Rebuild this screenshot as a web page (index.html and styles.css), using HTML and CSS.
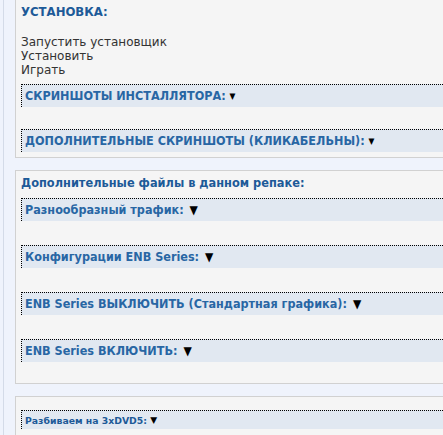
FILE: index.html
```html
<!DOCTYPE html>
<html lang="ru">
  <head>
    <meta charset="UTF-8" />
    <title>Установка</title>
    <link rel="stylesheet" href="styles.css">
  </head>
  <body>
    <div class="page">
      <div class="post post-cut">
        <div class="title">УСТАНОВКА:</div>
        <div class="steps">
          Запустить установщик<br />
          Установить<br />
          Играть
        </div>
        <div class="sp">
          <div class="sp-head">СКРИНШОТЫ ИНСТАЛЛЯТОРА: <span class="arrow">▼</span></div>
        </div>
        <div class="sp">
          <div class="sp-head">ДОПОЛНИТЕЛЬНЫЕ СКРИНШОТЫ (КЛИКАБЕЛЬНЫ): <span class="arrow">▼</span></div>
        </div>
      </div>

      <div class="post post-files">
        <div class="subtitle">Дополнительные файлы в данном репаке:</div>
        <div class="sp">
          <div class="sp-head big">Разнообразный трафик: <span class="arrow">▼</span></div>
        </div>
        <div class="sp">
          <div class="sp-head big">Конфигурации ENB Series: <span class="arrow">▼</span></div>
        </div>
        <div class="sp">
          <div class="sp-head big">ENB Series ВЫКЛЮЧИТЬ (Стандартная графика): <span class="arrow">▼</span></div>
        </div>
        <div class="sp">
          <div class="sp-head big">ENB Series ВКЛЮЧИТЬ: <span class="arrow">▼</span></div>
        </div>
      </div>

      <div class="post post-small">
        <div class="sp">
          <div class="sp-head small">Разбиваем на 3xDVD5: <span class="arrow">▼</span></div>
        </div>
      </div>
    </div>
  </body>
</html>
```

FILE: styles.css
```css
body {
  margin: 0;
  background-color: #eff3fc;
  font-family: "DejaVu Sans", Verdana, sans-serif;
  overflow: hidden;
}
.page {
  margin-left: 3px;
  border-left: 1px solid #d4dbe8;
  padding-left: 11px;
  min-height: 435px;
}
.post {
  width: 460px;
  background-color: #f5f5f5;
  border: 1px solid #d1d1d1;
  padding: 5px 0 21px 5px;
  margin-bottom: 12px;
}
.post-cut {
  border-top: none;
  padding-bottom: 5px;
}
.post-cut .sp {
  margin-bottom: 22px;
}
.post-small {
  padding-top: 13px;
}
.title {
  color: #1d5a98;
  font-family: "DejaVu Sans Condensed", "DejaVu Sans", sans-serif;
  font-stretch: condensed;
  font-weight: bold;
  font-size: 13px;
  line-height: 14px;
}
.steps {
  margin-top: 16px;
  margin-bottom: 7px;
  color: #333;
  font-size: 12px;
  line-height: 14px;
}
.subtitle {
  color: #1d5a98;
  font-weight: bold;
  font-size: 11.4px;
  line-height: 14px;
  margin-bottom: 8px;
}
.sp {
  margin-bottom: 24px;
}
.post .sp:last-child {
  margin-bottom: 0;
}
.sp-head {
  background-color: #e1e8f1;
  border-top: 1px dotted #000;
  border-left: 1px dotted #000;
  padding: 0 3px;
  height: 22px;
  line-height: 22px;
  color: #2866a4;
  font-family: "DejaVu Sans Condensed", "DejaVu Sans", sans-serif;
  font-stretch: condensed;
  font-weight: bold;
  font-size: 12.5px;
}
.sp-head .arrow {
  color: #000;
  font-size: 8.5px;
  vertical-align: 1px;
}
.sp-head.big .arrow {
  font-size: 12px;
  vertical-align: 0;
  margin-left: 2px;
}
.sp-head.small {
  height: 18px;
  line-height: 18px;
  font-family: "DejaVu Sans", sans-serif;
  font-stretch: normal;
  font-size: 9.3px;
  color: #1d5a98;
}
.sp-head.small .arrow {
  font-size: 9px;
}
```
